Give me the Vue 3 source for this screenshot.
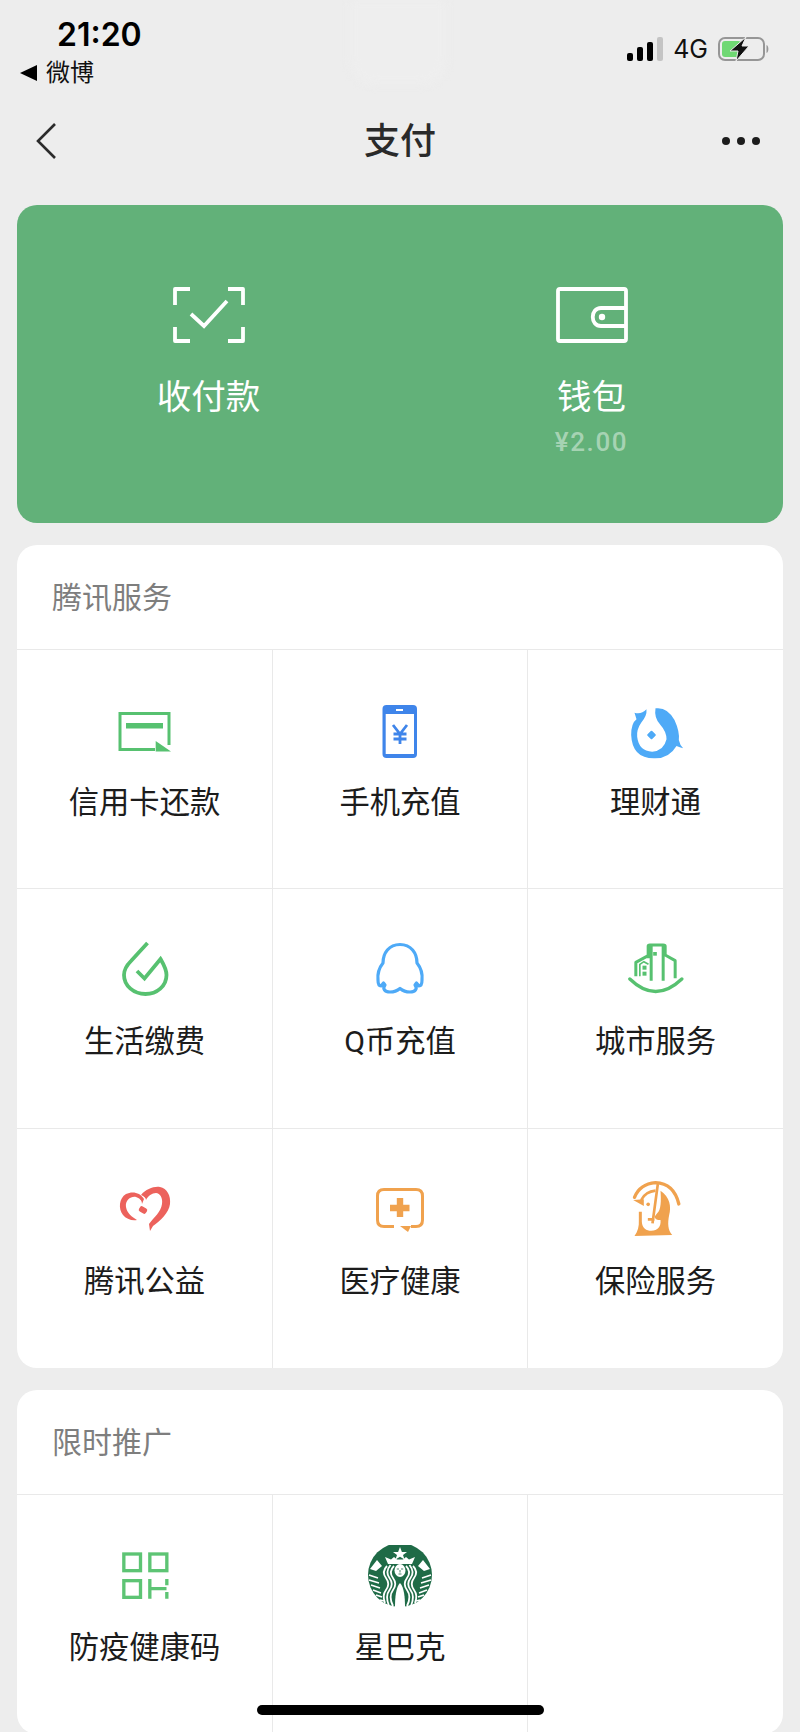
<template>
  <div class="page">
    <div class="notch"></div>
    <div class="status">
      <div class="status-left">
        <div class="time">21:20</div>
        <div class="back-app"><span class="tri"></span>微博</div>
      </div>
      <div class="status-right">
        <svg width="36" height="24" viewBox="0 0 36 24">
          <rect x="0" y="16" width="6" height="8" rx="2" fill="#000" />
          <rect x="10" y="10" width="6" height="14" rx="2" fill="#000" />
          <rect x="20" y="5" width="6" height="19" rx="2" fill="#000" />
          <rect x="30" y="0" width="6" height="24" rx="2" fill="#c4c4c4" />
        </svg>
        <span class="net">4G</span>
        <svg width="52" height="24" viewBox="0 0 52 24">
          <rect x="1" y="1" width="45" height="22" rx="6" fill="none" stroke="#969696" stroke-width="2" />
          <rect x="4" y="4" width="19" height="16" rx="3" fill="#6fd873" />
          <path d="M48.500 8 C51 9 51 15 48.500 16 Z" fill="#969696" />
          <path d="M28 0 L12 14 L20 14 L18 24 L31 9 L24 9 Z" fill="#111" stroke="#ededed" stroke-width="1" />
        </svg>
      </div>
    </div>

    <div class="nav">
      <svg class="nav-back" width="22" height="38" viewBox="0 0 22 38">
        <path d="M20 2 L3 19 L20 36" fill="none" stroke="#2b2b2b" stroke-width="2.600" />
      </svg>
      <div class="nav-title">支付</div>
      <div class="nav-more"><i></i><i></i><i></i></div>
    </div>

    <div class="hero">
      <div class="hero-item">
        <svg width="72" height="56" viewBox="0 0 72 56">
          <path d="M17 2 H2 V18 M55 2 H70 V18 M17 54 H2 V40 M55 54 H70 V40" fill="none" stroke="#fff" stroke-width="3.800" stroke-linejoin="round" />
          <path d="M18 32 L31 44 L54 19" transform="translate(0 -5)" fill="none" stroke="#fff" stroke-width="3.800" />
        </svg>
        <div class="hero-label">收付款</div>
      </div>
      <div class="hero-item">
        <svg width="72" height="56" viewBox="0 0 72 56">
          <rect x="2" y="2" width="68" height="52" rx="2" fill="none" stroke="#fff" stroke-width="3.800" />
          <path d="M70 21 H45 C34 21 34 39 45 39 H70" fill="none" stroke="#fff" stroke-width="3.800" />
          <circle cx="46" cy="30" r="3.200" fill="#fff" />
        </svg>
        <div class="hero-label">钱包</div>
        <div class="hero-sub">¥2.00</div>
      </div>
    </div>

    <div v-for="group in groups" :key="group.title" class="card">
      <div class="card-title">{{ group.title }}</div>
      <div class="grid">
        <div v-for="item in group.items" :key="item.label" class="cell">
          <svg v-if="item.icon === 'credit'" class="icon" viewBox="0 0 64 64">
            <path d="M42 49.500 H7 V13.500 H56 V45" fill="none" stroke="#57c170" stroke-width="3" />
            <rect x="13" y="23" width="37" height="5.500" fill="#57c170" />
            <path d="M42.700 41 L58 51.500 H42.700 Z" fill="#57c170" />
          </svg>
          <svg v-else-if="item.icon === 'phone'" class="icon" viewBox="0 0 64 64">
            <rect x="14.500" y="5" width="34.500" height="53" rx="4" fill="#3f85ea" />
            <rect x="17.700" y="14" width="28.300" height="40" fill="#fff" />
            <rect x="28" y="9" width="7" height="2" fill="#fff" />
            <path d="M25 25 L32 34 L39 25 M32 34 V44 M25.500 34 H38.500 M25.500 39 H38.500" fill="none" stroke="#3f85ea" stroke-width="2.800" />
          </svg>
          <svg v-else-if="item.icon === 'fish'" class="icon" viewBox="40.500 30 192 192">
            <path d="M72 68 Q92 74 108 58 Q110 78 92 98 Q78 118 80 140 Q85 183 125 185 Q160 183 168 148 Q168 125 150 105 Q130 85 135 55 Q170 50 192 90 Q208 125 205 150 Q208 165 218 175 Q208 172 198 168 Q175 207 130 205 Q65 205 62 135 Q62 100 78 88 Z" fill="#4eaaf7" />
            <rect x="113" y="125" width="20" height="20" rx="3" transform="rotate(45 123 135)" fill="#4eaaf7" />
          </svg>
          <svg v-else-if="item.icon === 'drop'" class="icon" viewBox="0 0 64 64">
            <path d="M34.500 4 L18 22 C13 27 11 31 11 36 C11 47 21 55 32.500 55 C44 55 53.500 47 53.500 36 C53.500 30 51 26 47.500 20 L31.500 39.500 L24 32" fill="none" stroke="#57c170" stroke-width="3.800" />
          </svg>
          <svg v-else-if="item.icon === 'qq'" class="icon" viewBox="0 0 64 64">
            <path d="M32 5.500 C21 5.500 15 14 15 24 C11 29 9.500 36 10 41 C10 44 11 47 13 47 L15.500 44 L17 46 C14 50 17 53 22 53 C26 53 29 52 32 49.500 C35 52 38 53 42 53 C47 53 50 50 47 46 L48.500 44 L51 47 C53 47 54 44 54 41 C54.500 36 53 29 49 24 C49 14 43 5.500 32 5.500 Z" fill="none" stroke="#4eaaf7" stroke-width="3.200" stroke-linejoin="round" />
          </svg>
          <svg v-else-if="item.icon === 'city'" class="icon" viewBox="40.500 30 192 192">
            <path d="M58 150 Q135 225 214 150" fill="none" stroke="#57c170" stroke-width="10" stroke-linecap="round" />
            <path d="M113 88 V52 Q113 48 118 48 H158 Q164 48 164 52 V80 M122 155 V50 M158 155 V50 M164 78 L194 95 V148 M113 80 L76 100 V142" fill="none" stroke="#57c170" stroke-width="9" stroke-linejoin="round" />
            <path d="M88 142 V106 L100 98 L114 106" fill="none" stroke="#57c170" stroke-width="5" />
            <rect x="128" y="69" width="11" height="11" fill="#57c170" />
            <rect x="96" y="110" width="12" height="12" fill="#57c170" />
            <rect x="96" y="128" width="12" height="12" fill="#57c170" />
          </svg>
          <svg v-else-if="item.icon === 'heart'" class="icon" viewBox="0 0 64 64">
            <path d="M31 20 C27 13 19 12 13 15 C6 19 5 30 10 36 C13 40 19 42 24 41 C19 38 14 34 13 28 C12 21 18 17 23 18 C26 19 29 21 29 25 Z" fill="#ec625c" />
            <path d="M28 16 C33 10 41 7 47 8 C54 9 58 17 57 25 C56 34 47 42 40 47 L37 52 L36 45 C41 38 48 33 49 25 C50 19 47 14 43 14 C39 14 35 17 33 21 C33 19 31 17 28 16 Z" fill="#ec625c" />
            <rect x="26" y="28" width="8" height="6" rx="2" transform="rotate(30 30 31)" fill="#ec625c" />
          </svg>
          <svg v-else-if="item.icon === 'medical'" class="icon" viewBox="0 0 64 64">
            <path d="M26 47.500 H16 Q9.500 47.500 9.500 41 V17 Q9.500 10.500 16 10.500 H48 Q54.500 10.500 54.500 17 V41 Q54.500 47.500 48 47.500 H43" fill="none" stroke="#f0a24e" stroke-width="3" />
            <path d="M32 47 L43 47 L40 53 Z" fill="#f0a24e" />
            <path d="M22 29 H41.500 M32 19 V38" fill="none" stroke="#f0a24e" stroke-width="6.400" />
          </svg>
          <svg v-else-if="item.icon === 'shield'" class="icon" viewBox="40.500 27 192 192">
            <path d="M72 82 Q88 42 135 38 Q190 40 205 102" fill="none" stroke="#f0a24e" stroke-width="10" stroke-linecap="round" />
            <path d="M92 90 Q105 65 135 62" fill="none" stroke="#f0a24e" stroke-width="8" />
            <path d="M68 90 L100 88 L100 108 Z" fill="#f0a24e" />
            <circle cx="113" cy="103" r="5.500" fill="#f0a24e" />
            <path d="M142 42 L126 160 M112 148 H132" fill="none" stroke="#f0a24e" stroke-width="8" />
            <path d="M150 62 C178 80 183 110 176 135 C171 160 172 180 185 195 L72 198 C82 185 86 170 85 150 V125 H94 V155 C95 175 108 182 122 182 C142 182 152 170 150 150 C140 150 135 148 132 140 L140 130 C152 120 152 90 150 62 Z" fill="#f0a24e" />
          </svg>
          <svg v-else-if="item.icon === 'qr'" class="icon" viewBox="67.500 75 192 192">
            <g fill="none" stroke="#5dc474" stroke-width="10">
              <rect x="100" y="102" width="50" height="50" />
              <rect x="178" y="102" width="51" height="50" />
              <rect x="100" y="182" width="50" height="50" />
              <path d="M178 177 V236 M178 206 H228 M229 177 V196 M229 216 V236" />
            </g>
          </svg>
          <svg v-else-if="item.icon === 'star'" class="icon" viewBox="-32 -30 64 64">
            <circle r="32" fill="#1f6b47" />
            <path d="M0 -28 L1.900 -23 L7 -23 L3 -20 L4.500 -15.500 L0 -18.200 L-4.500 -15.500 L-3 -20 L-7 -23 L-1.900 -23 Z" fill="#fff" />
            <path d="M-15 -18 L-9 -15.500 L-6 -18 L-3 -15.500 H3 L6 -18 L9 -15.500 L15 -18 L12 -11 H-12 Z" fill="#fff" />
            <path d="M-30 -6 L-23 -15 L-18 -9 L-24 -4 Z M30 -6 L23 -15 L18 -9 L24 -4 Z" fill="#fff" />
            <g fill="none" stroke="#fff" stroke-width="1.600">
              <path d="M-31 0 L-22 3 M-31 5 L-21 8 M-29 10 L-20 13 M-27 15 L-19 18 M-24 20 L-18 22 M-20 25 L-16 26" />
              <path d="M31 0 L22 3 M31 5 L21 8 M29 10 L20 13 M27 15 L19 18 M24 20 L18 22 M20 25 L16 26" />
            </g>
            <g fill="none" stroke="#fff" stroke-width="1.800">
              <path d="M6 -9 C10 -5 10 -1 7 3 C4 7 4 11 7 15 C10 19 10 25 7 31" />
              <path d="M9.500 -10 C13.500 -5 13.500 -1 10.500 3 C7.500 7 7.500 11 10.500 15 C13.500 19 13.500 25 11 31" />
              <path d="M13 -9 C17 -5 17 -1 14 3 C11 7 11 11 14 15 C17 19 17 23 15 28" />
              <path d="M-6 -9 C-10 -5 -10 -1 -7 3 C-4 7 -4 11 -7 15 C-10 19 -10 25 -7 31" />
              <path d="M-9.500 -10 C-13.500 -5 -13.500 -1 -10.500 3 C-7.500 7 -7.500 11 -10.500 15 C-13.500 19 -13.500 25 -11 31" />
              <path d="M-13 -9 C-17 -5 -17 -1 -14 3 C-11 7 -11 11 -14 15 C-17 19 -17 23 -15 28" />
            </g>
            <ellipse cx="0" cy="-4.500" rx="5.500" ry="6.500" fill="#fff" />
            <path d="M-3.200 -6 H-1 M1 -6 H3.200 M0 -5 V-2.500 M-1.500 -1 H1.500" stroke="#1f6b47" stroke-width="0.800" fill="none" />
            <path d="M-5 32 C-5 22 -4 12 0 8 C4 12 5 22 5 32 Z" fill="#fff" />
          </svg>
          <div class="cell-label">{{ item.label }}</div>
        </div>
        <div v-if="group.last" class="cell"></div>
      </div>
    </div>

    <div class="home-bar"></div>
  </div>
</template>

<script setup>
const groups = [
  {
    title: '腾讯服务',
    items: [
      { label: '信用卡还款', icon: 'credit' },
      { label: '手机充值', icon: 'phone' },
      { label: '理财通', icon: 'fish' },
      { label: '生活缴费', icon: 'drop' },
      { label: 'Q币充值', icon: 'qq' },
      { label: '城市服务', icon: 'city' },
      { label: '腾讯公益', icon: 'heart' },
      { label: '医疗健康', icon: 'medical' },
      { label: '保险服务', icon: 'shield' }
    ]
  },
  {
    title: '限时推广',
    last: true,
    items: [
      { label: '防疫健康码', icon: 'qr' },
      { label: '星巴克', icon: 'star' }
    ]
  }
]
</script>

<style>
html, body {
  margin: 0;
  background: #ededed;
}
</style>

<style scoped>
.page {
  position: relative;
  width: 800px;
  height: 1732px;
  overflow: hidden;
  background: #ededed;
  font-family: Roboto, "Noto Sans CJK SC", sans-serif;
  color: #1c1c1c;
}

.notch {
  position: absolute;
  left: 350px;
  top: 0;
  width: 96px;
  height: 84px;
  border-radius: 0 0 24px 24px;
  background: #eeeeee;
  filter: blur(4px);
}

.status {
  position: relative;
  height: 100px;
  display: flex;
  justify-content: space-between;
}

.status-left {
  padding: 15px 0 0 20px;
}

.time {
  padding-left: 37px;
  font-family: Inter, sans-serif;
  font-size: 32px;
  line-height: 40px;
  font-weight: 600;
  color: #000;
}

.back-app {
  display: flex;
  align-items: center;
  font-size: 24px;
  line-height: 38px;
  margin-top: -1px;
  color: #111;
}

.tri {
  width: 0;
  height: 0;
  margin-right: 9px;
  border-top: 8px solid transparent;
  border-bottom: 8px solid transparent;
  border-right: 17px solid #000;
}

.status-right {
  display: flex;
  align-items: center;
  gap: 10px;
  height: 24px;
  margin: 37px 30px 0 0;
}

.net {
  font-family: Inter, sans-serif;
  font-size: 25px;
  line-height: 24px;
  color: #111;
}

.nav {
  height: 82px;
  margin-bottom: 23px;
  padding: 0 40px;
  display: grid;
  grid-template-columns: 1fr auto 1fr;
  align-items: center;
}

.nav-back {
  margin-left: -5px;
}

.nav-title {
  margin-bottom: 6px;
  font-size: 36px;
  font-weight: 500;
  color: #2a2a2a;
}

.nav-more {
  justify-self: end;
  display: flex;
  gap: 7px;
}

.nav-more i {
  width: 8px;
  height: 8px;
  border-radius: 50%;
  background: #1c1c1c;
}

.hero {
  height: 318px;
  margin: 0 17px 22px;
  padding-top: 82px;
  box-sizing: border-box;
  border-radius: 20px;
  background: #62b179;
  display: grid;
  grid-template-columns: 1fr 1fr;
}

.hero-item {
  display: flex;
  flex-direction: column;
  align-items: center;
  color: #fff;
}

.hero-label {
  margin-top: 30px;
  font-size: 34.500px;
  line-height: 48px;
  font-weight: 400;
}

.hero-sub {
  margin-top: 3px;
  font-size: 26px;
  line-height: 36px;
  font-weight: 500;
  letter-spacing: 1.600px;
  color: rgba(255, 255, 255, 0.45);
}

.card {
  margin: 0 17px 22px;
  border-radius: 20px;
  background: #fff;
  overflow: hidden;
}

.card-title {
  height: 105px;
  padding: 0 0 4px 35px;
  box-sizing: border-box;
  display: flex;
  align-items: center;
  border-bottom: 1px solid #e9e9e9;
  font-size: 30px;
  color: #7e7e7e;
}

.grid {
  display: grid;
  grid-template-columns: 255px 255px 1fr;
  grid-auto-rows: 239.330px;
}

.cell {
  padding-top: 50px;
  box-sizing: border-box;
  display: flex;
  flex-direction: column;
  align-items: center;
  border-left: 1px solid #e9e9e9;
  border-bottom: 1px solid #e9e9e9;
}

.cell:nth-child(3n + 1) {
  border-left: none;
}

.cell:nth-last-child(-n + 3) {
  border-bottom: none;
}

.icon {
  width: 64px;
  height: 64px;
  flex: none;
}

.cell-label {
  margin-top: 19px;
  font-size: 30.300px;
  line-height: 40px;
  color: #1c1c1c;
}

.home-bar {
  position: absolute;
  left: 257px;
  bottom: 17px;
  width: 287px;
  height: 10px;
  border-radius: 5px;
  background: #000;
}
</style>
